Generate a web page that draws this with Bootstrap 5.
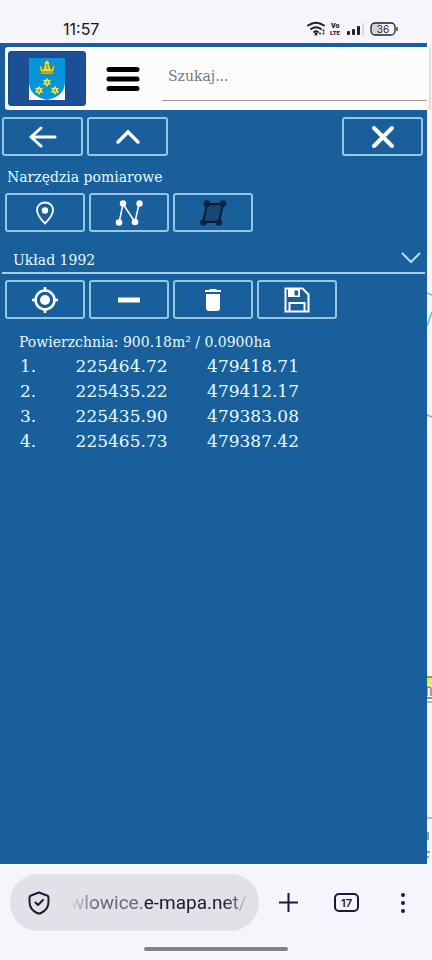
<!DOCTYPE html>
<html lang="pl">
<head>
<meta charset="utf-8">
<meta name="viewport" content="width=device-width, initial-scale=1">
<title>e-mapa – Narzędzia pomiarowe</title>
<link href="https://cdn.jsdelivr.net/npm/bootstrap@5.3.0/dist/css/bootstrap.min.css" rel="stylesheet">
<style>
body{background:#f6f5fb;font-family:"DejaVu Serif",serif;font-size:14px;line-height:20px;color:#e6fbff}
svg{display:block}
.status-bar{height:43px;padding:15px 34px 0 63px;font-family:Inter,sans-serif;color:#15151c}
.clock{font-size:16px;line-height:28px;font-weight:400}
.map-area{background:#f6f4f1}
.side-panel{background:#185f9b;padding:4px 2px 16px;min-width:0}
.map-strip{width:5px;overflow:hidden}
.top-card{background:#fcfcfd;height:63px;margin:0 -6px 0 3px;padding:4px 2px 4px 3px;border-radius:3px;position:relative;border-right:2px solid #e3dcd8}
.crest-btn{width:78px;height:55px;background:#1b4f96;border:1px solid #174a85;border-radius:3px}
.menu-btn{margin-left:20px}
.search-field{margin-left:22px;height:44px;border:0;border-bottom:1px solid #a59b91;border-radius:0;background:transparent;padding:0 6px 4px;font-size:14px;min-width:0}
.search-field::placeholder{color:#777;opacity:1}
.search-field:focus{box-shadow:none;background:transparent}
.tool-btn{width:80px;height:39px;border:2px solid #93c7e4;border-radius:3px;background:transparent;color:#fff}
.tool-btn:hover,.tool-btn:focus{background:#13568f}
.nav-tools{gap:4px;padding:7px 2px 0 0}
.nav-tools .tool-btn{width:81px}
.tool-row{gap:4px;padding-left:3px}
.tool-title{font-size:14px;line-height:20px;margin:11px 5px 6px}
.crs-select{height:32px;margin:10px 0 6px;width:100%;border:0;border-bottom:2px solid #a9cfe8;border-radius:0;background:transparent;color:#e6fbff;font-size:14px;line-height:20px;padding:5px 40px 0 11px;appearance:none}
.crs-select option{color:#222}
.crs-wrap{position:relative}
.crs-wrap svg{position:absolute;right:4px;top:9px;pointer-events:none}
.area-line{margin:13px 0 2px 17px}
.points{font-size:17px;line-height:25px;width:297px;color:#e6fbff}
.points td,.points th{padding:0;text-align:right;font-weight:400}
.points th{width:34px}
.points td{width:131px}
.browser-bar{height:96px;padding:10px 10px 0;font-family:Roboto,sans-serif;color:#1d1a35}
.url-btn{height:57px;width:249px;flex:0 1 249px;min-width:0;background:#e2e1e7;border:0;border-radius:29px;padding:0 11px 0 18px;color:#1d1a35}
.url-text{margin-left:20px;font-size:19px;line-height:24px;white-space:nowrap;color:#6b6a7c;-webkit-mask-image:linear-gradient(90deg,transparent,#000 14%,#000 86%,rgba(0,0,0,.3));mask-image:linear-gradient(90deg,transparent,#000 14%,#000 86%,rgba(0,0,0,.3))}
.url-text b{font-weight:400;color:#1d1a35}
.bar-btn{background:none;border:0;padding:0;color:#1d1a35}
.home-line{width:144px;height:4px;border-radius:2px;background:#828187}
</style>
<script src="https://cdn.jsdelivr.net/npm/bootstrap@5.3.0/dist/js/bootstrap.bundle.min.js"></script>
</head>
<body class="d-flex flex-column min-vh-100 m-0">

<div class="status-bar d-flex justify-content-between">
  <span class="clock">11:57</span>
  <svg width="92" height="28" viewBox="0 0 92 28" fill="none" stroke="#20202a" role="img" aria-label="Wi-Fi, VoLTE, 36%">
    <g stroke-width="2" stroke-linecap="round"><path d="M2 10.500Q10 5 18 10.500"/><path d="M5 14Q10 10.500 15 14"/><path d="M8 17Q10 15.500 12 17"/></g>
    <g fill="#20202a" stroke="none"><circle cx="10" cy="19" r="1.500"/><circle cx="14" cy="18.500" r="1"/><circle cx="17.500" cy="15.500" r="1"/><circle cx="17.500" cy="18.500" r="1"/>
    <text x="25" y="13" font-family="Roboto,sans-serif" font-size="7" font-weight="900">Vo</text>
    <text x="24" y="20" font-family="Roboto,sans-serif" font-size="6" font-weight="900">LTE</text>
    <rect x="41" y="16" width="3" height="4" rx="1"/><rect x="46" y="14" width="3" height="6" rx="1"/><rect x="51" y="11" width="3" height="9" rx="1"/><rect x="56" y="8" width="2" height="12" fill="#d9d8df"/>
    <path d="M68 8h6v12h-6q-3 0-3-3v-6q0-3 3-3z" fill="#d2d1d8"/></g>
    <rect x="65" y="8" width="24" height="12" rx="4" stroke-width="1.300"/><path d="M91 12v4" stroke-width="1.300"/>
    <text x="77" y="18" text-anchor="middle" font-family="Inter,sans-serif" font-size="10" fill="#20202a" stroke="none">36</text>
  </svg>
</div>

<main class="map-area d-flex flex-grow-1">
  <section class="side-panel flex-grow-1">
    <header class="top-card d-flex align-items-center">
      <button class="crest-btn btn p-0 d-flex align-items-center justify-content-center flex-shrink-0" aria-label="Herb gminy">
        <svg width="36" height="42" viewBox="0 0 36 42">
          <path fill="#fff" d="M0 0h36v42H0z"/><path fill="#0794da" d="M0 0h36v24q0 14-18 18Q0 38 0 24z"/>
          <path fill="#e9df37" stroke="#5b7d3d" stroke-width=".7" d="m10 6 4 5 2-5-1-1 3-3 3 3-1 1 2 5 4-5-2 10H12z"/>
          <path stroke="#74701f" d="M12 14h12M18 6v5M13 12l2-2M23 12l-2-2"/>
          <g fill="#efe632"><path id="crest-star" d="m18 20.500 1 2 2.500-.3-1.500 2 1.500 2.100-2.500-.2-1 2.300-1-2.300-2.500.2 1.500-2.100-1.500-2 2.500.3z" stroke="#efe632"/><use href="#crest-star" x="-8" y="8"/><use href="#crest-star" x="8" y="8"/></g>
          <g fill="#3188a0"><circle cx="18" cy="24.400" r="1"/><circle cx="10" cy="32.400" r="1"/><circle cx="26" cy="32.400" r="1"/></g>
        </svg>
      </button>
      <button class="menu-btn btn border-0 p-0 flex-shrink-0" aria-label="Menu">
        <svg width="34" height="26" viewBox="0 0 34 26" stroke="#000" stroke-width="5" stroke-linecap="round"><path d="M3 3.500h28M3 13h28M3 22.500h28"/></svg>
      </button>
      <input type="search" class="search-field form-control flex-grow-1" placeholder="Szukaj..." aria-label="Szukaj">
    </header>

    <nav class="nav-tools d-flex" aria-label="Panel">
      <button class="tool-btn btn p-0 d-flex align-items-center justify-content-center" aria-label="Wstecz">
        <svg width="28" height="24" viewBox="0 0 28 24" fill="none" stroke="#fff" stroke-width="3" stroke-linecap="round" stroke-linejoin="round"><path d="M26 12H2M12 3 2 12l10 9"/></svg>
      </button>
      <button class="tool-btn btn p-0 d-flex align-items-center justify-content-center" aria-label="Zwiń">
        <svg width="26" height="16" viewBox="0 0 26 16" fill="none" stroke="#fff" stroke-width="3.500" stroke-linecap="round"><path d="m3 13 10-10 10 10"/></svg>
      </button>
      <button class="tool-btn btn p-0 d-flex align-items-center justify-content-center ms-auto" aria-label="Zamknij">
        <svg width="24" height="24" viewBox="0 0 24 24" fill="none" stroke="#fff" stroke-width="4" stroke-linecap="round"><path d="m3 3 18 18M21 3 3 21"/></svg>
      </button>
    </nav>

    <h1 class="tool-title fw-normal">Narzędzia pomiarowe</h1>
    <div class="tool-row d-flex">
      <button class="tool-btn btn p-0 d-flex align-items-center justify-content-center" aria-label="Punkt">
        <svg width="20" height="24" viewBox="0 0 20 24"><path d="M10 1.500c4.700 0 8 3.200 8 7.500C18 14.500 10 22.500 10 22.500S2 14.500 2 9c0-4.300 3.300-7.500 8-7.500z" fill="none" stroke="#fff" stroke-width="1.800"/><circle cx="10" cy="9.500" r="3.200" fill="#fff"/></svg>
      </button>
      <button class="tool-btn btn p-0 d-flex align-items-center justify-content-center" aria-label="Linia">
        <svg width="28" height="28" viewBox="0 0 28 28"><path d="M4 24 8 5l12 18L24 5" fill="none" stroke="#fff" stroke-width="1.500"/><g fill="#fff"><circle cx="4" cy="23.500" r="3.300"/><circle cx="8" cy="4.500" r="3.200"/><circle cx="20" cy="23" r="3.300"/><circle cx="24.500" cy="4.500" r="3.200"/></g></svg>
      </button>
      <button class="tool-btn btn p-0 d-flex align-items-center justify-content-center active-tool" aria-label="Powierzchnia" aria-pressed="true">
        <svg width="28" height="28" viewBox="0 0 28 28"><path d="M8 5h16l-4 18H4z" fill="#184572" stroke="#07172b" stroke-width="1.800"/><g fill="#0a2340"><circle cx="4.500" cy="23.500" r="3.300"/><circle cx="8" cy="4.500" r="3.300"/><circle cx="20" cy="23.500" r="3.300"/><circle cx="24" cy="4.500" r="3.300"/></g></svg>
      </button>
    </div>

    <div class="crs-wrap">
      <select class="crs-select d-block" aria-label="Układ współrzędnych"><option>Układ 1992</option></select>
      <svg width="20" height="14" viewBox="0 0 20 14" fill="none" stroke="#b9dcf5" stroke-width="2"><path d="m1 2 9 9 9-9"/></svg>
    </div>

    <div class="tool-row d-flex">
      <button class="tool-btn btn p-0 d-flex align-items-center justify-content-center" aria-label="Lokalizacja">
        <svg width="28" height="28" viewBox="0 0 28 28" fill="none" stroke="#fff"><circle cx="14" cy="14" r="9.500" stroke-width="2.500"/><path d="M14 1v5M14 22v5M1 14h5M22 14h5" stroke-width="2.500"/><circle cx="14" cy="14" r="5" fill="#fff" stroke="none"/></svg>
      </button>
      <button class="tool-btn btn p-0 d-flex align-items-center justify-content-center" aria-label="Usuń punkt">
        <svg width="22" height="6" viewBox="0 0 22 6"><rect width="22" height="5" y=".5" rx=".5" fill="#fff"/></svg>
      </button>
      <button class="tool-btn btn p-0 d-flex align-items-center justify-content-center" aria-label="Wyczyść">
        <svg width="18" height="24" viewBox="0 0 18 24" fill="#fff"><path d="M1 2h4l1-1h6l1 1h4v2H1zM2 6h14v14q0 3-3 3H5q-3 0-3-3z"/></svg>
      </button>
      <button class="tool-btn btn p-0 d-flex align-items-center justify-content-center" aria-label="Zapisz">
        <svg width="26" height="26" viewBox="0 0 26 26" fill="none" stroke="#fff" stroke-width="2"><path d="M1.500 1.500h17l6 6v17h-23z"/><path d="M5.500 24v-8h15v8"/><path d="M4 2h12v8H4z" fill="#fff" stroke="none"/><path d="M10.500 3.500h3.500v5h-3.500z" fill="#185f9b" stroke="none"/></svg>
      </button>
    </div>

    <p class="area-line">Powierzchnia: 900.18m² / 0.0900ha</p>
    <table class="points">
      <tbody>
        <tr><th scope="row">1.</th><td>225464.72</td><td>479418.71</td></tr>
        <tr><th scope="row">2.</th><td>225435.22</td><td>479412.17</td></tr>
        <tr><th scope="row">3.</th><td>225435.90</td><td>479383.08</td></tr>
        <tr><th scope="row">4.</th><td>225465.73</td><td>479387.42</td></tr>
      </tbody>
    </table>
  </section>
  <svg class="map-strip flex-shrink-0" width="5" height="821" viewBox="0 0 5 821" fill="none" stroke="#69b9d0" stroke-width="1.500" aria-hidden="true">
    <path d="M0 250l5 2M0 283l5-14M0 372l5 2"/>
    <path fill="#eeea4b" stroke="none" d="M0 634h5v8H0z"/><path stroke="#77704e" d="M0 634h5M0 655h5"/><path stroke="#8b7d75" d="M0 643v10M0 645q4-3 4 2v6"/>
    <path d="M0 659h5M0 775h5"/><path stroke="#7aa0bd" stroke-width="2" d="M1 789v8M0 809h3M0 814h2"/>
  </svg>
</main>

<footer class="browser-bar d-flex flex-column">
  <div class="d-flex align-items-center">
    <button class="url-btn d-flex align-items-center overflow-hidden" aria-label="Adres strony">
      <svg class="flex-shrink-0" width="22" height="24" viewBox="0 0 22 24" fill="none" stroke="#1d1a35" stroke-width="2" stroke-linecap="round" stroke-linejoin="round"><path d="m11 1.500 8 3q1.500.5 1.500 2v4q0 8-7.500 11.500-2 1-4 0Q1.500 18.500 1.500 10.500v-4q0-1.500 1.500-2z"/><path d="m7.500 11.500 2.500 2.500 5-5"/></svg>
      <span class="url-text">wlowice.<b>e-mapa.net</b>/</span>
    </button>
    <div class="d-flex flex-grow-1 align-items-center justify-content-between ps-3 pe-3">
      <button class="bar-btn ms-1" aria-label="Nowa karta"><svg width="19" height="19" viewBox="0 0 19 19" stroke="#1d1a35" stroke-width="2"><path d="M9.500 0v19M0 9.500h19"/></svg></button>
      <button class="bar-btn me-1" aria-label="Karty: 17"><svg width="26" height="20" viewBox="0 0 26 20"><rect x="1" y="1" width="23" height="17" rx="4" fill="none" stroke="#1d1a35" stroke-width="2"/><text x="12.500" y="13.500" text-anchor="middle" font-family="Inter,sans-serif" font-weight="600" font-size="11" fill="#1d1a35">17</text></svg></button>
      <button class="bar-btn" aria-label="Więcej"><svg width="6" height="20" viewBox="0 0 6 20" fill="#1d1a35"><circle cx="3" cy="2" r="2"/><circle cx="3" cy="10" r="2"/><circle cx="3" cy="18" r="2"/></svg></button>
    </div>
  </div>
  <div class="home-line mx-auto mt-3"></div>
</footer>
</body>
</html>
